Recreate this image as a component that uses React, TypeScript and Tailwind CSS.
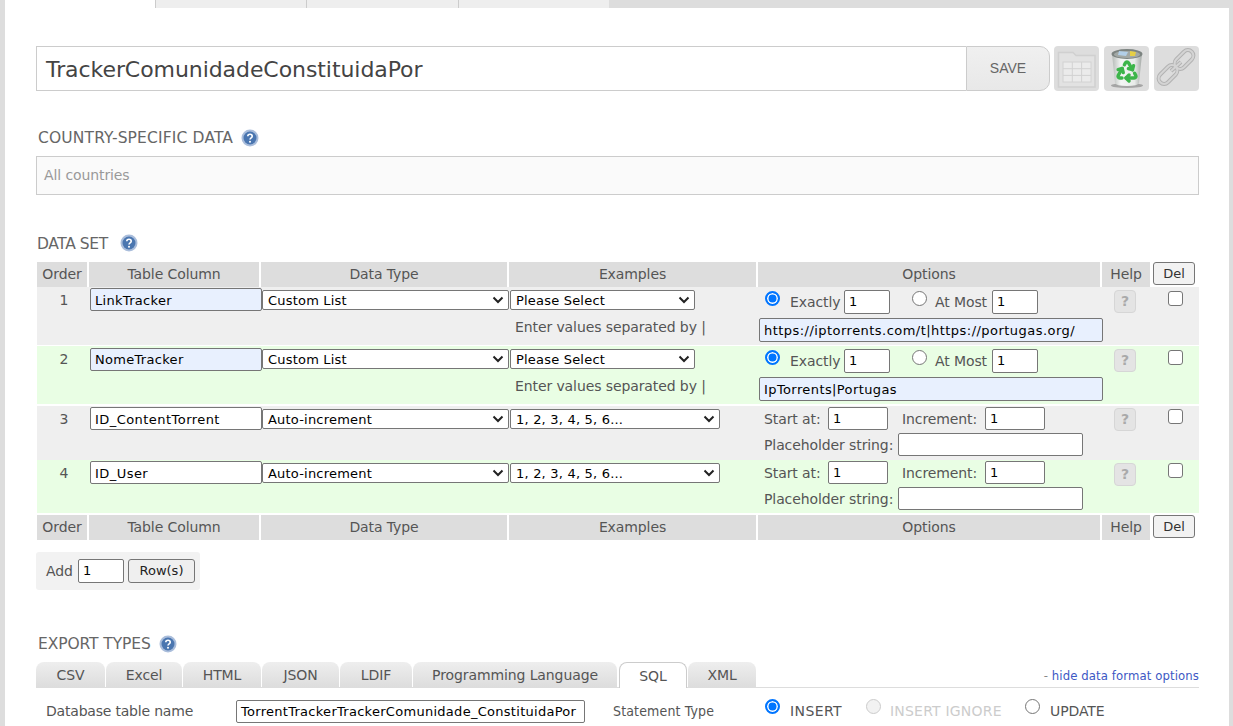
import { Recycle } from "lucide-react";

function HelpDot() {
  return (
    <svg width="18" height="18" viewBox="0 0 18 18" className="shrink-0">
      <circle cx="9" cy="9" r="8.5" fill="#a9bddb" />
      <circle cx="9" cy="9" r="6.5" fill="#4a76b0" />
      <path d="M6.8 7.2C6.8 4.6 11.2 4.6 11.2 7.2C11.2 8.800 9 8.800 9 10.600" fill="none" stroke="#fff" strokeWidth="1.600" />
      <circle cx="9" cy="12.800" r="1" fill="#fff" />
    </svg>
  );
}

function Radio({ on, off, className = "" }: { on?: boolean; off?: boolean; className?: string }) {
  return (
    <span
      className={
        "inline-block w-[15px] h-[15px] rounded-full shrink-0 " +
        className +
        " " +
        (on
          ? "border-2 border-[#0075ff] bg-[#0075ff] shadow-[inset_0_0_0_1.5px_#fff]"
          : off
            ? "border border-[#ccc] bg-[#f2f2f2]"
            : "border border-[#767676] bg-white")
      }
    />
  );
}

function Select({ value, w }: { value: string; w: string }) {
  return (
    <div className={"h-5 bg-white border border-[#767676] rounded-[2px] flex items-center justify-between pl-[5px] pr-[4px] text-[13px] text-black " + w}>
      <span className="pt-px tracking-[0.2px]">{value}</span>
      <svg width="12" height="8" viewBox="0 0 12 8">
        <path d="M1.500 1.500L6 6L10.500 1.500" fill="none" stroke="#222" strokeWidth="2" />
      </svg>
    </div>
  );
}

function Field({ value, w, blue, h = "h-6", track = "tracking-[0.35px]" }: { value: string; w: string; blue?: boolean; h?: string; track?: string }) {
  return (
    <div className={"border border-[#767676] rounded-[2px] flex items-center pl-[4px] text-[13px] text-black shrink-0 " + track + " " + h + " " + w + " " + (blue ? "bg-[#e8f0fe]" : "bg-white")}>
      {value}
    </div>
  );
}

function HelpBtn() {
  return (
    <div className="mt-[3px] ml-[12px] w-[22px] h-[23px] rounded-[4px] bg-[#e4e4e4] border border-[#d6d6d6] flex items-center justify-center text-[14px] font-bold text-[#aaa]">?</div>
  );
}

function Check({ top }: { top: string }) {
  return <div className={"mx-auto w-[15px] h-[15px] rounded-[3px] border border-[#767676] bg-white " + top} />;
}

const COLS = "grid grid-cols-[50px_170px_246px_247px_342px_48px_47px] gap-x-[2px]";

function HeaderRow() {
  const cell = "bg-[#ddd] flex items-center justify-center";
  return (
    <div className={COLS + " h-[25px] text-[14px] text-[#555]"}>
      <div className={cell}>Order</div>
      <div className={cell}>Table Column</div>
      <div className={cell}>Data Type</div>
      <div className={cell}>Examples</div>
      <div className={cell}>Options</div>
      <div className={cell}>Help</div>
      <div className="flex items-start pl-[1px]">
        <div className="w-[42px] h-[23px] bg-[#f2f2f2] border border-[#767676] rounded-[3px] flex items-center justify-center text-[13px] text-[#333]">Del</div>
      </div>
    </div>
  );
}

function ListRow({ n, name, bg, list, fieldTop, fieldText, listTrack }: { n: number; name: string; bg: string; list: string; fieldTop: string; fieldText: string; listTrack: string }) {
  return (
    <div className={COLS + " h-[58px] text-[14px] text-[#555] " + bg}>
      <div className="text-center pt-[3px] pl-[4px]">{n}</div>
      <div className={"pl-[1px] " + fieldTop}>
        <Field value={name} w={"w-[172px] " + fieldText} blue h="h-[23px]" track="tracking-[0.3px]" />
      </div>
      <div className="pl-[1px] pt-[3px]">
        <Select value="Custom List" w="w-[247px]" />
      </div>
      <div className="pl-[1px] pt-[3px]">
        <Select value="Please Select" w="w-[185px]" />
        <div className="mt-[7px] pl-[5px]">Enter values separated by |</div>
      </div>
      <div className="pl-[1px]">
        <div className="flex items-start pt-[3px] pl-[6px] h-[28px]">
          <Radio on className="mt-[1px]" />
          <span className="ml-[10px] w-[54px] mt-[1.5px]">Exactly</span>
          <Field value="1" w="w-[46px]" />
          <Radio className="ml-[22px] mt-[1px]" />
          <span className="ml-[8px] w-[57px] mt-[1.5px]">At Most</span>
          <Field value="1" w="w-[46px]" />
        </div>
        <div className="mt-[3px]">
          <Field value={list} w="w-[344px] pt-[2px]" blue track={listTrack} />
        </div>
      </div>
      <div><HelpBtn /></div>
      <div><Check top="mt-[4px]" /></div>
    </div>
  );
}

function AutoRow({ n, name, bg, h, helpTop }: { n: number; name: string; bg: string; h: string; helpTop: string }) {
  return (
    <div className={COLS + " text-[14px] text-[#555] " + bg + " " + h}>
      <div className="text-center pt-[3px] pl-[4px]">{n}</div>
      <div className="pl-[1px] pt-[1px]">
        <Field value={name} w="w-[172px] pt-[2px]" h="h-[23px]" track="tracking-[0.45px]" />
      </div>
      <div className="pl-[1px] pt-[3px]">
        <Select value="Auto-increment" w="w-[247px]" />
      </div>
      <div className="pl-[1px] pt-[3px]">
        <Select value="1, 2, 3, 4, 5, 6..." w="w-[210px]" />
      </div>
      <div className="pl-[6px]">
        <div className="flex items-center h-[23px] mt-[1px]">
          <span className="w-[64px] pt-px">Start at:</span>
          <Field value="1" w="w-[60px]" h="h-[23px]" />
          <span className="ml-[14px] w-[83px] pt-px">Increment:</span>
          <Field value="1" w="w-[60px]" h="h-[23px]" />
        </div>
        <div className="flex items-center mt-[3px]">
          <span className="w-[134px] pt-px">Placeholder string:</span>
          <Field value="" w="w-[185px]" h="h-[23px]" />
        </div>
      </div>
      <div className={helpTop}><HelpBtn /></div>
      <div><Check top="mt-[3px]" /></div>
    </div>
  );
}

function TableIcon() {
  return (
    <svg width="45" height="45" viewBox="0 0 45 45">
      <rect width="45" height="45" rx="4" fill="#ddd" />
      <path d="M4.500 6.500H19L22 9.500H41V41H4.500Z" fill="#e2e2e2" stroke="#d0d0d0" strokeWidth="1.500" />
      <rect x="9" y="16" width="28" height="20" fill="#ebebeb" stroke="#d2d2d2" />
      <path d="M18.300 16V36M27.600 16V36M9 22.700H37M9 29.400H37" stroke="#d2d2d2" />
    </svg>
  );
}

function Trash() {
  return (
    <svg width="45" height="45" viewBox="0 0 45 45">
      <defs>
        <linearGradient id="can" x1="0" y1="0" x2="1" y2="0">
          <stop offset="0" stopColor="#b5bab7" />
          <stop offset="0.3" stopColor="#f4f6f5" />
          <stop offset="0.75" stopColor="#e8ebe9" />
          <stop offset="1" stopColor="#a4a9a6" />
        </linearGradient>
      </defs>
      <rect width="45" height="45" rx="4" fill="#ddd" />
      <ellipse cx="23" cy="39.500" rx="16" ry="2.500" fill="#a5a5a5" />
      <path d="M8 8H38L35 37Q34 40 23 40Q12 40 11 37Z" fill="url(#can)" />
      <ellipse cx="23" cy="8" rx="15.500" ry="5" fill="#7c8380" />
      <ellipse cx="23" cy="8.500" rx="13" ry="3.500" fill="#a2a8a5" />
      <path d="M15 5L24 6L22 10L14 9Z" fill="#b2cfe8" />
      <path d="M26 5L32 6L31 10L26 10Z" fill="#e6cf45" />
      <Recycle x={11} y={13} size={24} color="#3cb54a" strokeWidth={3.400} />
    </svg>
  );
}

function LinkIcon() {
  const links = (
    <>
      <rect x="3" y="23" width="22" height="11" rx="5.500" transform="rotate(-45 14 28.500)" />
      <rect x="19" y="8" width="22" height="11" rx="5.500" transform="rotate(-45 30 13.500)" />
      <path d="M17 25L27 16" />
    </>
  );
  return (
    <svg width="45" height="45" viewBox="0 0 45 45">
      <rect width="45" height="45" rx="4" fill="#ddd" />
      <g fill="none" stroke="#b2b2b2" strokeWidth="4">{links}</g>
      <g fill="none" stroke="#d4d4d4" strokeWidth="2">{links}</g>
    </svg>
  );
}

const TABS = [
  ["CSV", "w-[69px]"],
  ["Excel", "w-[76px]"],
  ["HTML", "w-[78px]"],
  ["JSON", "w-[77px]"],
  ["LDIF", "w-[72px]"],
  ["Programming Language", "w-[204px]"],
];

export default function App() {
  return (
    <div className="h-[726px] overflow-hidden bg-[#ddd] pl-[5px] pr-[4px] font-['DejaVu_Sans',sans-serif] tracking-[-0.1px]">
      <div className="flex h-2">
        <div className="w-[150px] bg-white" />
        <div className="w-[151px] bg-[#eee] border-l border-[#ccc]" />
        <div className="w-[152px] bg-[#eee] border-l border-[#ccc]" />
        <div className="w-[151px] bg-[#eee] border-l border-[#ccc]" />
      </div>
      <div className="bg-white h-[718px] pl-[31px] pr-[30px] pt-[38px]">
        {/* Title row */}
        <div className="flex h-[45px]">
          <div className="w-[930px] border border-[#ccc] border-r-0 flex items-center pl-[9px] pt-[2px] text-[22px] tracking-[-0.07px] text-[#444]">TrackerComunidadeConstituidaPor</div>
          <div className="w-[84px] border border-[#ccc] rounded-r-[10px] bg-gradient-to-b from-[#f0f0f0] to-[#e8e8e8] flex items-center justify-center text-[14px] tracking-normal text-[#666] font-['Liberation_Sans']">SAVE</div>
          <div className="ml-[4px] flex gap-[5px]">
            <TableIcon />
            <Trash />
            <LinkIcon />
          </div>
        </div>

        {/* Country */}
        <div className="mt-[38px] pl-[2px] h-[18px] flex items-center gap-[8px] text-[15.5px] tracking-[0.15px] text-[#666]">
          <span className="pt-[2px]">COUNTRY-SPECIFIC DATA</span> <HelpDot />
        </div>
        <div className="mt-[9px] h-[39px] border border-[#ccc] bg-[#fafafa] flex items-center pl-[7px] text-[14px] text-[#999]">All countries</div>

        {/* Data set */}
        <div className="mt-[39px] pl-[1px] h-[18px] flex items-center gap-[12px] text-[15.5px] tracking-[-0.4px] text-[#666]">
          <span className="pt-[4px]">DATA SET</span> <HelpDot />
        </div>
        <div className="mt-[10px] pl-[1px] flex flex-col">
          <HeaderRow />
          <div className="mb-[1px]">
            <ListRow n={1} name="LinkTracker" bg="bg-[#efefef]" fieldTop="pt-[1px]" fieldText="pt-[2px]" listTrack="tracking-[0.46px]" list="https://iptorrents.com/t|https://portugas.org/" />
          </div>
          <div className="mb-[2px]">
            <ListRow n={2} name="NomeTracker" bg="bg-[#e9fee4]" fieldTop="pt-[2px]" fieldText="" listTrack="tracking-[0.4px]" list="IpTorrents|Portugas" />
          </div>
          <AutoRow n={3} name="ID_ContentTorrent" bg="bg-[#efefef]" h="h-[54px]" helpTop="-mt-px" />
          <AutoRow n={4} name="ID_User" bg="bg-[#e9fee4] mb-[2px]" h="h-[53px]" helpTop="" />
          <HeaderRow />
        </div>

        {/* Add rows */}
        <div className="mt-[12px] w-[164px] h-[38px] bg-[#f2f2f2] rounded-[3px] flex items-center pl-[10px] text-[14px] text-[#555]">
          <span className="w-[32px]">Add</span>
          <Field value="1" w="w-[46px]" />
          <div className="ml-[4px] w-[67px] h-[24px] border border-[#767676] rounded-[3px] bg-[#efefef] flex items-center justify-center text-[13px] tracking-normal text-[#222]">Row(s)</div>
        </div>

        {/* Export types */}
        <div className="mt-[45px] pl-[2px] h-[18px] flex items-center gap-[8px] text-[15.5px] tracking-[-0.1px] text-[#666]">
          <span className="pt-[2px]">EXPORT TYPES</span> <HelpDot />
        </div>
        <div className="mt-[9px] flex items-end h-[26px] border-b border-[#ddd] text-[14px] text-[#555]">
          {TABS.map(([t, w]) => (
            <div key={t} className={"h-[25px] mr-[1px] pt-[2px] rounded-t-[8px] bg-gradient-to-b from-[#eee] to-[#ddd] flex items-center justify-center " + w}>{t}</div>
          ))}
          <div className="h-[26px] w-[68px] -mb-px mx-[1px] pt-[2px] bg-white border border-b-0 border-[#ccc] rounded-t-[8px] flex items-center justify-center">SQL</div>
          <div className="h-[25px] w-[68px] pt-[2px] rounded-t-[8px] bg-gradient-to-b from-[#eee] to-[#ddd] flex items-center justify-center">XML</div>
          <div className="ml-auto pb-[2px] text-[13px] tracking-[0.1px] text-[#888] font-['DejaVu_Sans_Condensed']">- <span className="text-[#3d58c4]">hide data format options</span></div>
        </div>
        <div className="mt-[12px] flex items-start text-[14px] text-[#555]">
          <span className="ml-[10px] w-[190px] mt-[1px] tracking-[-0.2px]">Database table name</span>
          <Field value="TorrentTrackerTrackerComunidade_ConstituidaPor" w="w-[349px] whitespace-nowrap overflow-hidden" h="h-[23px]" track="tracking-[0.28px]" />
          <span className="ml-[28px] w-[152px] mt-[1px] font-['DejaVu_Sans_Condensed'] tracking-[0.15px]">Statement Type</span>
          <Radio on className="-mt-px" />
          <span className="ml-[10px] w-[76px] mt-[1px] tracking-[0.4px]">INSERT</span>
          <Radio off className="-mt-px" />
          <span className="ml-[9px] w-[135px] mt-[1px] tracking-[0.2px] text-[#ccc]">INSERT IGNORE</span>
          <Radio className="-mt-px" />
          <span className="ml-[10px] mt-[1px]">UPDATE</span>
        </div>
      </div>
    </div>
  );
}
